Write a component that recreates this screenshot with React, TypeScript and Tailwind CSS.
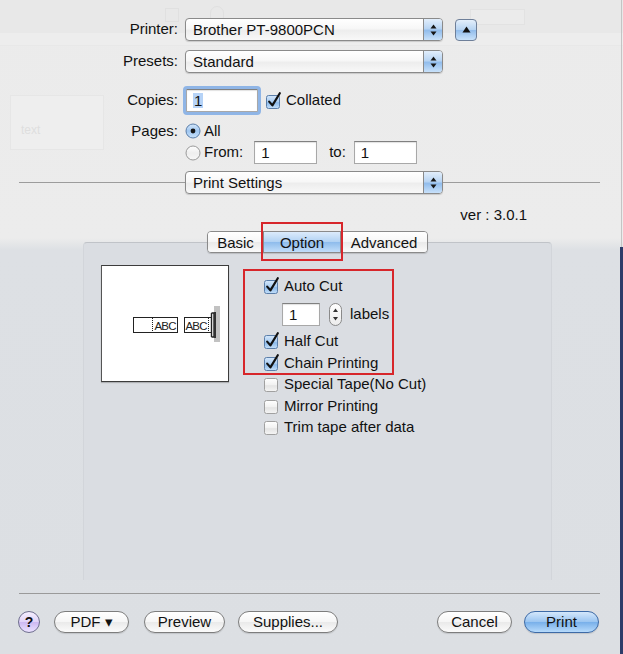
import React from "react";

function Arrows() {
  return (
    <svg width="7" height="12" viewBox="0 0 7 12">
      <path d="M3.5 0.5 L6.5 4.5 H0.5Z" fill="#151515" />
      <path d="M0.5 7.5 H6.5 L3.5 11.5Z" fill="#151515" />
    </svg>
  );
}

function Popup({ text }: { text: string }) {
  return (
    <div className="flex h-[23px] w-[258px] items-stretch overflow-hidden rounded-[4px] border border-[#8a8a8a] bg-[linear-gradient(to_bottom,#ffffff_0%,#f7f7f7_45%,#ededed_55%,#f8f8f8_100%)] shadow-[0_1px_1px_rgba(0,0,0,0.15)]">
      <div className="flex flex-1 items-center pl-[7px] leading-none">{text}</div>
      <div className="flex w-[19px] items-center justify-center border-l border-[#8a8a8a] bg-[linear-gradient(to_bottom,#e2eefb_0%,#b9d5f3_45%,#92bdec_55%,#c8e1fa_100%)]">
        <Arrows />
      </div>
    </div>
  );
}

function Check({ on, id }: { on: boolean; id: string }) {
  return (
    <svg width="18" height="18" viewBox="0 0 18 18" className="shrink-0">
      <defs>
        <linearGradient id={id} x1="0" y1="0" x2="0" y2="1">
          {on ? (
            <>
              <stop offset="0" stopColor="#d6e8fb" />
              <stop offset="0.5" stopColor="#a7cbf1" />
              <stop offset="0.55" stopColor="#8bb9ea" />
              <stop offset="1" stopColor="#c5e0fa" />
            </>
          ) : (
            <>
              <stop offset="0" stopColor="#ffffff" />
              <stop offset="0.5" stopColor="#f1f1f1" />
              <stop offset="0.55" stopColor="#e4e4e4" />
              <stop offset="1" stopColor="#f5f5f5" />
            </>
          )}
        </linearGradient>
      </defs>
      <rect x="1.5" y="3.5" width="13" height="13" rx="2" fill={`url(#${id})`} stroke={on ? "#5b7ea9" : "#a0a0a0"} />
      {on && <path d="M4.2 9.6 L7.4 13.4 L14.8 1.2" fill="none" stroke="#111" strokeWidth="2.2" strokeLinecap="round" strokeLinejoin="round" />}
    </svg>
  );
}

function Radio({ on, id }: { on: boolean; id: string }) {
  return (
    <svg width="16" height="16" viewBox="0 0 16 16" className="shrink-0">
      <defs>
        <linearGradient id={id} x1="0" y1="0" x2="0" y2="1">
          {on ? (
            <>
              <stop offset="0" stopColor="#d6e8fb" />
              <stop offset="0.5" stopColor="#9fc6f0" />
              <stop offset="1" stopColor="#c9e2fa" />
            </>
          ) : (
            <>
              <stop offset="0" stopColor="#ffffff" />
              <stop offset="0.5" stopColor="#eeeeee" />
              <stop offset="1" stopColor="#f7f7f7" />
            </>
          )}
        </linearGradient>
      </defs>
      <circle cx="8" cy="8" r="7" fill={`url(#${id})`} stroke={on ? "#5b7ea9" : "#9a9a9a"} />
      {on && <circle cx="8" cy="8" r="2.4" fill="#161616" />}
    </svg>
  );
}

function Field({ w, children, focus }: { w: string; children: React.ReactNode; focus?: boolean }) {
  return (
    <div
      className={`flex h-[23px] items-center border border-[#a8a8a8] border-t-[#808080] bg-white pl-[6px] leading-none shadow-[inset_0_1px_1px_rgba(0,0,0,0.12)] ${w} ${
        focus ? "outline-[3px] outline-solid outline-[#8fb5e6] rounded-[1px]" : ""
      }`}
    >
      {children}
    </div>
  );
}

function Btn({ children, w, primary }: { children: React.ReactNode; w: string; primary?: boolean }) {
  return (
    <div
      className={`flex h-[22px] items-center justify-center rounded-full border leading-none shadow-[0_1px_1px_rgba(0,0,0,0.12)] ${w} ${
        primary
          ? "border-[#3d6aa6] bg-[linear-gradient(to_bottom,#d4e7fb_0%,#9cc6f1_48%,#79b0ea_52%,#b6dafb_100%)]"
          : "border-[#7d7d7d] bg-[linear-gradient(to_bottom,#ffffff_0%,#f6f6f6_48%,#eaeaea_52%,#fbfbfb_100%)]"
      }`}
    >
      {children}
    </div>
  );
}

function TapePreview() {
  return (
    <svg width="126" height="115" viewBox="0 0 126 115">
      <g fill="none" stroke="#222" strokeWidth="1">
        <rect x="31.5" y="51.5" width="44" height="15" />
        <line x1="50.5" y1="52" x2="50.5" y2="66" strokeDasharray="1 1" />
        <rect x="82.5" y="51.5" width="27" height="15" />
        <line x1="106.5" y1="52" x2="106.5" y2="66" strokeDasharray="1 1" />
      </g>
      <text x="52.5" y="63.5" fontFamily="'Liberation Sans', Arial, sans-serif" fontSize="11.5" textLength="22" fill="#222">ABC</text>
      <text x="83.5" y="63.5" fontFamily="'Liberation Sans', Arial, sans-serif" fontSize="11.5" textLength="22" fill="#222">ABC</text>
      <rect x="112" y="40" width="6" height="36" fill="#c2c2c2" />
      <path d="M109.5 47 V71 M109.5 47 H112 V71 H109.5" fill="none" stroke="#222" strokeWidth="1.4" />
      <rect x="112" y="46" width="2" height="26" fill="#333" />
    </svg>
  );
}

export default function App() {
  return (
    <div className="relative h-[654px] w-[623px] overflow-hidden bg-[linear-gradient(to_bottom,#ebebeb_0px,#ececec_238px,#dde0e4_250px,#dcdfe3_654px)] font-['Liberation_Sans',Arial,sans-serif] text-[15px] text-[#111]">
      {/* faint ghosted toolbar behind the sheet */}
      <div className="pointer-events-none absolute inset-x-0 top-0 h-[46px] bg-[#e8e8e8]">
        <div className="absolute left-0 right-0 top-[33px] h-[12px] bg-[#ededed]" />
        <div className="absolute left-[470px] top-[9px] h-[16px] w-[55px] border border-[#e2e2e2] bg-[#ebebeb]" />
        <div className="absolute left-[165px] top-[8px] h-[14px] w-[14px] border border-[#e0e0e0]" />
        <div className="absolute left-[210px] top-[6px] h-[18px] w-[14px] rounded-full border border-[#e0e0e0]" />
      </div>
      <div className="pointer-events-none absolute left-[10px] top-[95px] h-[55px] w-[94px] border border-[#e6e6e6] bg-[#eeeeee] pl-[10px] pt-[25px] text-[12px] text-[#dedede]">
        text
      </div>
      {/* window edge */}
      <div className="absolute right-[1px] top-0 h-[247px] w-px bg-[#c4c4c4]" />
      <div className="absolute right-0 top-[247px] h-[407px] w-[3px] bg-[#2d3c69]" />

      <div className="relative flex flex-col">
        {/* Printer */}
        <div className="mt-[18px] flex h-[23px] items-center">
          <div className="w-[178px] text-right">Printer:</div>
          <div className="ml-[7px]">
            <Popup text="Brother PT-9800PCN" />
          </div>
          <div className="ml-[12px] flex h-[22px] w-[22px] items-center justify-center rounded-[4px] border border-[#6e7f99] bg-[linear-gradient(to_bottom,#e4effb_0%,#b7d4f2_48%,#93bdeb_52%,#c9e2fa_100%)]">
            <svg width="9" height="7" viewBox="0 0 9 7">
              <path d="M4.5 0.5 L8.5 6.5 H0.5Z" fill="#111" />
            </svg>
          </div>
        </div>
        {/* Presets */}
        <div className="mt-[9px] flex h-[23px] items-center">
          <div className="w-[178px] text-right">Presets:</div>
          <div className="ml-[7px]">
            <Popup text="Standard" />
          </div>
        </div>
        {/* Copies */}
        <div className="mt-[16px] flex h-[23px] items-center">
          <div className="w-[178px] text-right">Copies:</div>
          <div className="ml-[8px]">
            <Field w="w-[72px]" focus>
              <span className="bg-[#b6d3f7] px-[1px]">1</span>
            </Field>
          </div>
          <div className="ml-[7px] flex items-center gap-[3px]">
            <Check on id="c-col" />
            <span>Collated</span>
          </div>
        </div>
        {/* Pages */}
        <div className="mt-[11px] flex h-[16px] items-center">
          <div className="w-[178px] text-right">Pages:</div>
          <div className="ml-[7px] flex items-center gap-[3px]">
            <Radio on id="r-all" />
            <span>All</span>
          </div>
        </div>
        {/* From */}
        <div className="mt-[2px] flex h-[23px] items-center">
          <div className="ml-[185px] flex items-center gap-[3px]">
            <Radio on={false} id="r-from" />
            <span>From:</span>
          </div>
          <div className="ml-[11px]">
            <Field w="w-[63px]">1</Field>
          </div>
          <span className="ml-[12px]">to:</span>
          <div className="ml-[8px]">
            <Field w="w-[63px]">1</Field>
          </div>
        </div>
        {/* Section popup with separator */}
        <div className="ml-[19px] mt-[7px] flex h-[23px] w-[581px] items-center">
          <div className="h-px w-[166px] bg-[#9c9c9c]" />
          <Popup text="Print Settings" />
          <div className="h-px flex-1 bg-[#9c9c9c]" />
        </div>
        {/* version */}
        <div className="mt-[13px] flex h-[16px] items-center justify-end pr-[96px]">ver : 3.0.1</div>
        {/* tabs */}
        <div className="relative z-10 ml-[207px] mt-[8px] flex h-[22px] w-[221px]">
          <div className="flex h-full w-full overflow-hidden rounded-[4px] border border-[#8a8a8a] shadow-[0_1px_1px_rgba(0,0,0,0.15)]">
            <div className="flex w-[55px] items-center justify-center bg-[linear-gradient(to_bottom,#ffffff_0%,#f6f6f6_48%,#eaeaea_52%,#fafafa_100%)] leading-none">
              Basic
            </div>
            <div className="flex w-[78px] items-center justify-center border-x border-[#8a8a8a] bg-[linear-gradient(to_bottom,#dcebfb_0%,#b2d2f3_48%,#8fbcec_52%,#c2def9_100%)] leading-none">
              Option
            </div>
            <div className="flex flex-1 items-center justify-center bg-[linear-gradient(to_bottom,#ffffff_0%,#f6f6f6_48%,#eaeaea_52%,#fafafa_100%)] leading-none">
              Advanced
            </div>
          </div>
          <div className="absolute left-[54px] top-[-9px] h-[39px] w-[82px] border-2 border-[#d7262b]" />
        </div>
        {/* tab panel */}
        <div className="ml-[83px] mt-[-11px] flex h-[338px] w-[469px] rounded-t-[4px] border border-b-0 border-[#d2d5da] border-t-[#c0c3c8] bg-[#dadde2] pl-[17px] pt-[22px]">
          <div className="h-[117px] w-[128px] border border-[#3c3c3c] border-l-[#555] bg-white shadow-[0_1px_1px_rgba(0,0,0,0.2)]">
            <TapePreview />
          </div>
          <div className="relative ml-[34px] mt-[12px] flex flex-col">
            <div className="absolute left-[-20px] top-[-8px] h-[106px] w-[151px] border-2 border-[#d7262b]" />
            <div className="flex h-[18px] items-center gap-[3px]">
              <Check on id="o-ac" />
              <span>Auto Cut</span>
            </div>
            <div className="ml-[19px] mt-[7px] flex h-[24px] items-center">
              <Field w="w-[38px]">1</Field>
              <div className="ml-[9px] flex h-[23px] w-[13px] items-center justify-center rounded-full border border-[#8a8a8a] bg-[linear-gradient(to_bottom,#ffffff,#ececec)]">
                <svg width="7" height="15" viewBox="0 0 7 15">
                  <path d="M3.5 1.5 L6 5 H1Z" fill="#333" />
                  <path d="M1 10 H6 L3.5 13.5Z" fill="#333" />
                </svg>
              </div>
              <span className="ml-[8px]">labels</span>
            </div>
            <div className="mt-[6px] flex h-[18px] items-center gap-[3px]">
              <Check on id="o-hc" />
              <span>Half Cut</span>
            </div>
            <div className="mt-[4px] flex h-[18px] items-center gap-[3px]">
              <Check on id="o-cp" />
              <span>Chain Printing</span>
            </div>
            <div className="mt-[3px] flex h-[18px] items-center gap-[3px]">
              <Check on={false} id="o-st" />
              <span>Special Tape(No Cut)</span>
            </div>
            <div className="mt-[4px] flex h-[18px] items-center gap-[3px]">
              <Check on={false} id="o-mp" />
              <span>Mirror Printing</span>
            </div>
            <div className="mt-[3px] flex h-[18px] items-center gap-[3px]">
              <Check on={false} id="o-tt" />
              <span>Trim tape after data</span>
            </div>
          </div>
        </div>
        {/* bottom separator */}
        <div className="ml-[19px] mt-[13px] h-px w-[581px] bg-[#9a9a9a]" />
        {/* buttons */}
        <div className="mt-[16px] flex h-[23px] items-center">
          <div className="ml-[18px] flex h-[22px] w-[22px] items-center justify-center rounded-full border border-[#6f6f8f] bg-[linear-gradient(to_bottom,#f5efff_0%,#e0d2f8_50%,#cdb9f2_52%,#ebe2ff_100%)] text-[14px] font-bold leading-none">
            ?
          </div>
          <div className="ml-[14px]">
            <Btn w="w-[75px]">PDF ▾</Btn>
          </div>
          <div className="ml-[15px]">
            <Btn w="w-[81px]">Preview</Btn>
          </div>
          <div className="ml-[13px]">
            <Btn w="w-[100px]">Supplies...</Btn>
          </div>
          <div className="ml-[99px]">
            <Btn w="w-[75px]">Cancel</Btn>
          </div>
          <div className="ml-[12px]">
            <Btn w="w-[75px]" primary>
              Print
            </Btn>
          </div>
        </div>
      </div>
    </div>
  );
}
